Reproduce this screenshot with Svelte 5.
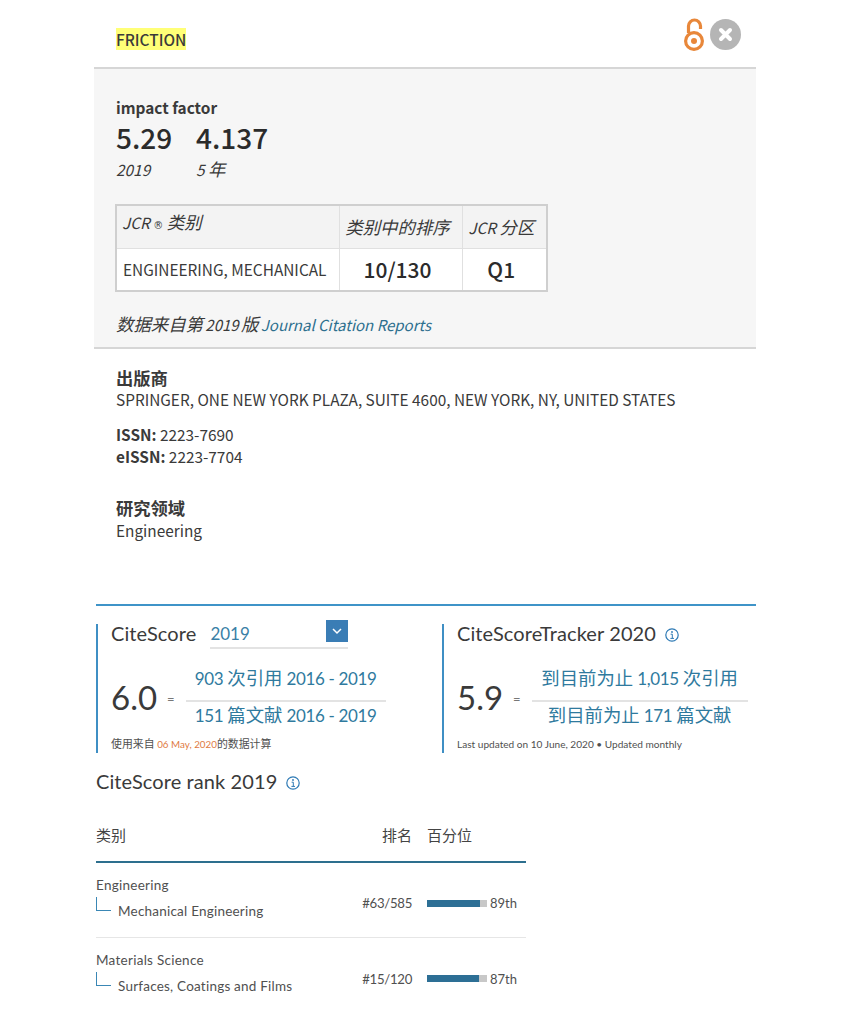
<script>
  const ranks = [
    { group: 'Engineering', name: 'Mechanical Engineering', rank: '#63/585', pct: 89 },
    { group: 'Materials Science', name: 'Surfaces, Coatings and Films', rank: '#15/120', pct: 87 }
  ]
</script>

<div class="page">
  <header class="top">
    <span class="journal">FRICTION</span>
    <div class="top-icons">
      <svg class="oa" width="22" height="34" viewBox="0 0 22 34">
        <path d="M6.5 15 V8 a6 6 0 0 1 12 0 V11" fill="none" stroke="#e8873a" stroke-width="3.2"/>
        <circle cx="12" cy="23" r="8.4" fill="none" stroke="#e8873a" stroke-width="3.2"/>
        <circle cx="12" cy="23" r="3" fill="#e8873a"/>
      </svg>
      <svg width="31" height="31" viewBox="0 0 31 31">
        <circle cx="15.5" cy="15.5" r="15.5" fill="#b5b5b5"/>
        <path d="M11 11 L20 20 M20 11 L11 20" stroke="#fff" stroke-width="4" stroke-linecap="round"/>
      </svg>
    </div>
  </header>

  <section class="impact">
    <h3>impact factor</h3>
    <div class="factors">
      <div class="factor"><strong>5.29</strong><em>2019</em></div>
      <div class="factor"><strong>4.137</strong><em>5 <span class="zh">年</span></em></div>
    </div>
    <table>
      <thead>
        <tr>
          <th class="c1 first">JCR <small>®</small> <span class="zh">类别</span></th>
          <th class="c2"><span class="zh">类别中的排序</span></th>
          <th class="c3">JCR <span class="zh">分区</span></th>
        </tr>
      </thead>
      <tbody>
        <tr>
          <td class="cat">ENGINEERING, MECHANICAL</td>
          <td class="big">10/130</td>
          <td class="big">Q1</td>
        </tr>
      </tbody>
    </table>
    <p class="source"><span class="zh">数据来自第</span> 2019 <span class="zh">版</span> <a href="#top">Journal Citation Reports</a></p>
  </section>

  <section class="info">
    <h4>出版商</h4>
    <p>SPRINGER, ONE NEW YORK PLAZA, SUITE 4600, NEW YORK, NY, UNITED STATES</p>
    <p class="issn"><b>ISSN:</b> 2223-7690</p>
    <p><b>eISSN:</b> 2223-7704</p>
    <h4 class="area">研究领域</h4>
    <p class="area-name">Engineering</p>
  </section>

  <section class="scores">
    <div class="score left">
      <div class="score-head">
        <span class="title">CiteScore</span>
        <div class="select">
          <span>2019</span>
          <span class="caret">
            <svg width="12" height="8" viewBox="0 0 12 8"><path d="M2 2 L6 6 L10 2" fill="none" stroke="#fff" stroke-width="1.5"/></svg>
          </span>
        </div>
      </div>
      <div class="formula">
        <span class="value">6.0</span>
        <span class="eq">=</span>
        <div class="fraction">
          <span class="above">903 <span class="zh">次引用</span> 2016 - 2019</span>
          <span class="below">151 <span class="zh">篇文献</span> 2016 - 2019</span>
        </div>
      </div>
      <p class="note"><span class="zh">使用来自</span> <span class="date">06 May, 2020</span><span class="zh">的数据计算</span></p>
    </div>
    <div class="score right">
      <div class="score-head">
        <span class="title">CiteScoreTracker 2020</span>
        <svg class="info-icon" width="14" height="14" viewBox="0 0 14 14">
          <circle cx="7" cy="7" r="6.2" fill="none" stroke="#2e7ab5" stroke-width="1.2"/>
          <path d="M5.6 6.2 H7.3 V10.4 M5.4 10.4 H9" fill="none" stroke="#2e7ab5" stroke-width="1"/>
          <circle cx="7" cy="4" r="0.9" fill="#2e7ab5"/>
        </svg>
      </div>
      <div class="formula">
        <span class="value">5.9</span>
        <span class="eq">=</span>
        <div class="fraction wide">
          <span class="above"><span class="zh">到目前为止</span> 1,015 <span class="zh">次引用</span></span>
          <span class="below"><span class="zh">到目前为止</span> 171 <span class="zh">篇文献</span></span>
        </div>
      </div>
      <p class="note">Last updated on 10 June, 2020 • Updated monthly</p>
    </div>
  </section>

  <section class="rank">
    <div class="rank-title">
      <span class="title">CiteScore rank 2019</span>
      <svg class="info-icon" width="14" height="14" viewBox="0 0 14 14">
        <circle cx="7" cy="7" r="6.2" fill="none" stroke="#2e7ab5" stroke-width="1.2"/>
        <path d="M5.6 6.2 H7.3 V10.4 M5.4 10.4 H9" fill="none" stroke="#2e7ab5" stroke-width="1"/>
        <circle cx="7" cy="4" r="0.9" fill="#2e7ab5"/>
      </svg>
    </div>
    <div class="rank-table">
      <div class="rank-head">
        <span class="col-name">类别</span>
        <span class="col-rank">排名</span>
        <span class="col-pct">百分位</span>
      </div>
      {#each ranks as r}
        <div class="rank-row">
          <div class="col-name">
            <div class="group">{r.group}</div>
            <div class="sub"><span class="elbow"></span>{r.name}</div>
          </div>
          <span class="col-rank num">{r.rank}</span>
          <div class="col-pct bar-cell">
            <span class="bar"><span class="fill" style="width: {r.pct}%"></span></span>
            <span class="num">{r.pct}th</span>
          </div>
        </div>
      {/each}
    </div>
  </section>
</div>

<style>
  :global(body) {
    background: #fff;
  }

  .page {
    width: 662px;
    margin-left: 94px;
    height: 1026px;
    overflow: hidden;
    font-family: "Noto Sans CJK SC", "Noto Sans", sans-serif;
    color: #3a3a3a;
  }

  .top {
    height: 67px;
    box-sizing: border-box;
    display: flex;
    justify-content: space-between;
    padding: 18px 15px 0 22px;
  }

  .journal {
    align-self: flex-start;
    margin-top: 10px;
    background: #ffff77;
    font-size: 15.4px;
    line-height: 22px;
    font-weight: 500;
  }

  .top-icons {
    display: flex;
    gap: 6px;
    align-items: flex-start;
    height: 34px;
  }

  .top-icons svg:last-child {
    margin-top: 1px;
  }

  .impact {
    height: 282px;
    box-sizing: border-box;
    background: #f6f6f6;
    border-top: 2px solid #d6d6d6;
    border-bottom: 2px solid #d6d6d6;
    padding: 27px 22px 0;
  }

  h3 {
    margin: 0;
    font-size: 15.4px;
    line-height: 22px;
    font-weight: 700;
  }

  .factors {
    display: flex;
    margin-top: 1px;
  }

  .factor {
    width: 80px;
    display: flex;
    flex-direction: column;
  }

  .factor strong {
    font-size: 28px;
    line-height: 36px;
    font-weight: 500;
    color: #2b2b2b;
  }

  .factor em {
    font-size: 15.4px;
    line-height: 26px;
    margin-top: 1px;
  }

  .zh {
    font-size: 1.13em;
  }

  table {
    margin: 22px 0 0 -1px;
    width: 433px;
    height: 88px;
    border-collapse: collapse;
    border: 2px solid #cfcfcf;
    table-layout: fixed;
  }

  th {
    background: #f3f3f3;
    font-weight: 400;
    font-style: italic;
    font-size: 15.4px;
    height: 43px;
    padding: 0 8px 0 2px;
    border: 1px solid #e0e0e0;
    text-align: center;
    box-sizing: border-box;
  }

  th small {
    font-family: "DejaVu Sans", sans-serif;
    font-size: 10px;
    font-style: normal;
  }

  th.first {
    text-align: left;
    vertical-align: top;
    padding-top: 3px;
    padding-left: 5px;
  }

  .c1 {
    width: 223px;
  }

  .c2 {
    width: 123px;
  }

  td {
    background: #fff;
    border: 1px solid #e0e0e0;
    padding: 0 6px;
    text-align: center;
  }

  td.cat {
    text-align: left;
    font-size: 15.4px;
  }

  td.big {
    font-size: 21px;
    font-weight: 500;
    color: #2b2b2b;
    padding: 0 9px 0 3px;
  }

  .source {
    margin: 20px 0 0;
    font-size: 15px;
    line-height: 24px;
    font-style: italic;
    word-spacing: -1px;
  }

  .source .zh {
    font-size: 17.4px;
  }

  a {
    color: #2d6f8e;
    text-decoration: none;
    word-spacing: 0;
  }

  .info {
    padding: 18px 22px 0;
    height: 255px;
    box-sizing: border-box;
  }

  h4 {
    margin: 0;
    font-size: 17.3px;
    line-height: 21px;
    font-weight: 700;
  }

  .info p {
    margin: 0;
    font-size: 15.38px;
    line-height: 22px;
  }

  .info p b {
    font-weight: 700;
  }

  .info .issn {
    margin-top: 13px;
  }

  h4.area {
    margin-top: 30px;
  }

  .info .area-name {
    margin-top: 1px;
  }

  .scores {
    margin-left: 2px;
    border-top: 2px solid #3f94c8;
    padding-top: 18px;
    display: flex;
    font-family: Lato, "Noto Sans CJK SC", sans-serif;
  }

  .score {
    height: 129px;
    border-left: 2px solid #3f8fc4;
    box-sizing: border-box;
  }

  .left {
    width: 332px;
    padding-left: 13px;
    margin-right: 14px;
  }

  .right {
    width: 314px;
    padding-left: 13px;
  }

  .score-head {
    display: flex;
    align-items: center;
    height: 26px;
    margin-top: -3px;
  }

  .title {
    font-size: 20px;
    line-height: 26px;
    color: #3a3a3a;
    letter-spacing: 0.1px;
  }

  .score-head .title {
    margin-bottom: 3px;
  }

  .select {
    width: 138px;
    margin-left: 14px;
    height: 26px;
    display: flex;
    justify-content: space-between;
    border-bottom: 2px solid #e3e3e3;
    font-size: 17px;
    line-height: 26px;
    color: #3a7fa6;
    position: relative;
    top: 1px;
  }

  .caret {
    width: 22px;
    height: 22px;
    margin-top: -1px;
    background: #3a7db5;
    display: flex;
    align-items: center;
    justify-content: center;
  }

  .info-icon {
    margin-left: 9px;
    margin-top: 3px;
  }

  .score-head .info-icon {
    margin-top: 1px;
  }

  .formula {
    display: flex;
    align-items: center;
    margin-top: 17px;
  }

  .value {
    font-size: 33px;
    line-height: 42px;
    color: #3a3a3a;
  }

  .eq {
    font-size: 13px;
    color: #777;
    margin: 5px 11px 0 10px;
  }

  .fraction {
    width: 200px;
    display: flex;
    flex-direction: column;
    align-items: center;
    font-size: 17px;
    letter-spacing: -0.35px;
    line-height: 28px;
    color: #2f7a9e;
  }

  .fraction.wide {
    width: 216px;
  }

  .fraction .zh {
    font-size: 18.4px;
    letter-spacing: 0;
  }

  .above {
    height: 28px;
    padding-bottom: 8px;
  }

  .below {
    align-self: stretch;
    text-align: center;
    border-top: 2px solid #e3e3e3;
    line-height: 26px;
  }

  .note {
    margin: 7px 0 0;
    font-size: 10.1px;
    line-height: 16px;
    color: #505050;
  }

  .note .zh {
    font-size: 10.9px;
  }

  .date {
    color: #e07a3f;
    font-size: 9.8px;
  }

  .rank {
    margin-left: 2px;
    width: 430px;
    font-family: Lato, "Noto Sans CJK SC", sans-serif;
    padding-top: 15px;
  }

  .rank-title {
    display: flex;
    align-items: center;
  }

  .rank-head {
    display: flex;
    align-items: center;
    height: 54px;
    margin-top: 13px;
    font-size: 15px;
    color: #444;
    border-bottom: 2px solid #2d6f8e;
  }

  .col-name {
    flex: 0 0 auto;
    width: 256px;
  }

  .col-rank {
    width: 60px;
    text-align: right;
  }

  .col-pct {
    margin-left: 15px;
  }

  .rank-row {
    display: flex;
    align-items: center;
    height: 75px;
    border-bottom: 1px solid #e6e6e6;
    font-size: 14px;
    color: #505050;
    box-sizing: border-box;
  }

  .rank-row:last-child {
    border-bottom: 0;
  }

  .rank-row .col-name {
    align-self: flex-start;
    padding-top: 12px;
  }

  .rank-row .col-rank,
  .bar-cell {
    margin-top: 6px;
  }

  .group {
    font-size: 13.5px;
    line-height: 20px;
    letter-spacing: 0.27px;
  }

  .sub {
    font-size: 13.5px;
    line-height: 20px;
    letter-spacing: 0.22px;
    margin-top: 6px;
    position: relative;
    padding-left: 22px;
  }

  .elbow {
    position: absolute;
    left: 0;
    top: -4px;
    width: 14px;
    height: 13px;
    border-left: 1px solid #3a87b5;
    border-bottom: 1px solid #3a87b5;
  }

  .num {
    font-size: 13.2px;
    letter-spacing: -0.3px;
  }

  .bar-cell {
    display: flex;
    align-items: center;
    gap: 3px;
  }

  .bar-cell .num {
    font-size: 13px;
    letter-spacing: 0;
  }

  .bar {
    width: 60px;
    height: 7px;
    background: #c8c8c8;
    display: block;
  }

  .fill {
    display: block;
    height: 100%;
    background: #2d6f95;
  }
</style>
